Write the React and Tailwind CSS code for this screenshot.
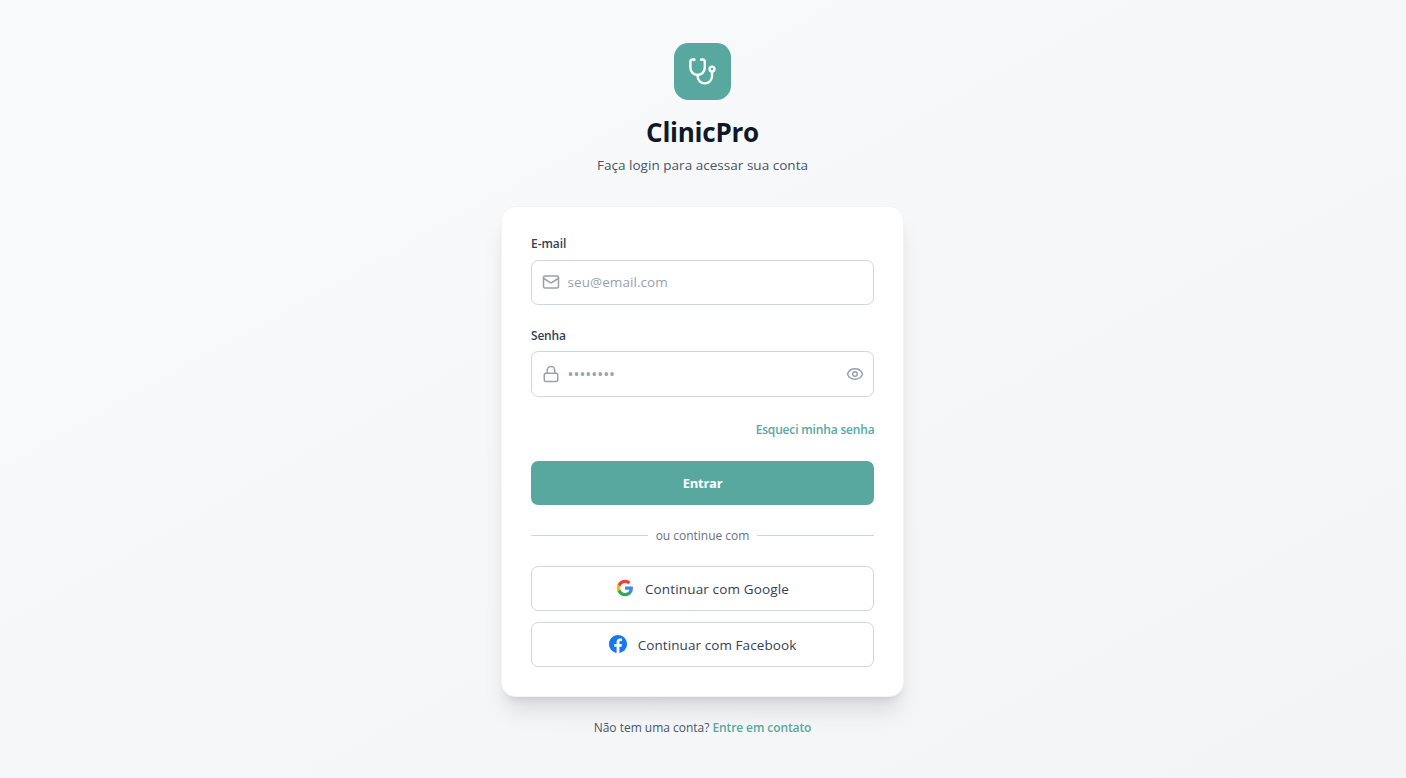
import { Lock, Eye } from "lucide-react";

function StethoscopeIcon() {
  return (
    <svg
      className="size-[28.8px] text-white"
      viewBox="0 0 24 24"
      fill="none"
      stroke="currentColor"
      strokeWidth="2"
      strokeLinecap="round"
      strokeLinejoin="round"
    >
      <path d="M4.8 2.3A.3.3 0 1 0 5 2H4a2 2 0 0 0-2 2v5a6 6 0 0 0 6 6 6 6 0 0 0 6-6V4a2 2 0 0 0-2-2h-1a.2.2 0 1 0 .3.3" />
      <path d="M8 15v1a6 6 0 0 0 6 6 6 6 0 0 0 6-6v-4" />
      <circle cx="20" cy="10" r="2" />
    </svg>
  );
}

function MailIcon() {
  return (
    <svg
      className="size-[18px] text-gray-400"
      viewBox="0 0 24 24"
      fill="none"
      stroke="currentColor"
      strokeWidth="2"
      strokeLinecap="round"
      strokeLinejoin="round"
    >
      <rect width="20" height="16" x="2" y="4" rx="2" />
      <path d="m22 7-8.97 5.7a1.94 1.94 0 0 1-2.06 0L2 7" />
    </svg>
  );
}

function GoogleIcon() {
  return (
    <svg className="mb-px size-[18px] shrink-0" viewBox="0 0 24 24">
      <path fill="#4285F4" d="M22.56 12.25c0-.78-.07-1.53-.2-2.25H12v4.26h5.92c-.26 1.37-1.04 2.53-2.21 3.31v2.77h3.57c2.08-1.92 3.28-4.74 3.28-8.09z" />
      <path fill="#34A853" d="M12 23c2.97 0 5.46-.98 7.28-2.66l-3.57-2.77c-.98.66-2.23 1.06-3.71 1.06-2.86 0-5.29-1.93-6.16-4.53H2.18v2.84C3.99 20.53 7.7 23 12 23z" />
      <path fill="#FBBC05" d="M5.84 14.09c-.22-.66-.35-1.36-.35-2.09s.13-1.43.35-2.09V7.07H2.18C1.43 8.55 1 10.22 1 12s.43 3.45 1.18 4.93l2.85-2.22.81-.62z" />
      <path fill="#EA4335" d="M12 5.38c1.62 0 3.06.56 4.21 1.64l3.15-3.15C17.45 2.09 14.97 1 12 1 7.7 1 3.99 3.47 2.18 7.07l3.66 2.84c.87-2.6 3.3-4.53 6.16-4.53z" />
    </svg>
  );
}

function FacebookIcon() {
  return (
    <svg className="mb-px size-[18px] shrink-0" viewBox="0 0 24 24">
      <path fill="#1877F2" d="M24 12.073c0-6.627-5.373-12-12-12s-12 5.373-12 12c0 5.99 4.388 10.954 10.125 11.854v-8.385H7.078v-3.47h3.047V9.43c0-3.007 1.792-4.669 4.533-4.669 1.312 0 2.686.235 2.686.235v2.953H15.83c-1.491 0-1.956.925-1.956 1.874v2.25h3.328l-.532 3.47h-2.796v8.385C19.612 23.027 24 18.062 24 12.073z" />
    </svg>
  );
}

export default function App() {
  return (
    <div className="flex h-[778px] justify-center bg-linear-to-br from-gray-50 to-gray-100 pr-px pt-[43px] font-['Open_Sans',sans-serif]">
      <div className="flex w-[403px] flex-col items-center">
        <div className="flex size-[57px] items-center justify-center rounded-[14.4px] bg-[#58a8a0]">
          <StethoscopeIcon />
        </div>
        <h1 className="mt-4 whitespace-nowrap text-[26px] leading-8 font-bold tracking-[-0.25px] text-gray-900">ClinicPro</h1>
        <p className="mt-[6px] whitespace-nowrap text-[13.5px] leading-[22px] tracking-[0.03px] text-gray-600">Faça login para acessar sua conta</p>

        <main className="mt-[29.5px] flex h-[491px] w-full flex-col rounded-[14.4px] border border-gray-100 bg-white px-[29px] pt-[28.5px] shadow-[0_18px_22.5px_-4.5px_rgba(0,0,0,0.1),0_7.2px_9px_-5.4px_rgba(0,0,0,0.1)]">
          <label className="text-[12px] leading-[18px] font-semibold tracking-[-0.05px] text-gray-700">E-mail</label>
          <div className="mt-[7px] flex h-[45px] items-center rounded-[7.2px] border border-gray-300 px-[10px] pb-px">
            <MailIcon />
            <span className="ml-[7.5px] text-[13.5px] leading-[22px] tracking-[0.07px] text-gray-400">seu@email.com</span>
          </div>
          <label className="mt-[22px] text-[12px] leading-[18px] font-semibold tracking-[-0.2px] text-gray-700">Senha</label>
          <div className="mt-[6px] flex h-[46px] items-center rounded-[7.2px] border border-gray-300 pr-[9px] pl-[10px]">
            <Lock className="size-[18px] text-gray-400" />
            <span className="ml-[7.5px] text-[15.8px] leading-[22px] text-gray-400">••••••••</span>
            <Eye className="ml-auto size-[18px] text-gray-400" />
          </div>
          <a className="mt-6 -mr-[0.5px] self-end whitespace-nowrap text-[12px] leading-[18px] font-semibold tracking-[-0.17px] text-[#58a8a0]">Esqueci minha senha</a>
          <button className="mt-[22px] h-[44px] rounded-[7.2px] bg-[#58a8a0] pt-[2px] text-[13px] font-bold tracking-[-0.25px] text-white">Entrar</button>
          <div className="mt-[22px] flex items-center">
            <div className="mb-px h-px flex-1 bg-gray-300" />
            <span className="px-2 text-[12px] leading-[18px] tracking-[-0.02px] text-gray-500">ou continue com</span>
            <div className="mb-px h-px flex-1 bg-gray-300" />
          </div>
          <button className="mt-[21px] flex h-[45px] items-center justify-center gap-[11px] rounded-[7.2px] border border-gray-300 text-[13.5px] tracking-[0.15px] text-gray-700">
            <GoogleIcon />
            <span className="pt-[2px]">Continuar com Google</span>
          </button>
          <button className="mt-[11px] flex h-[45px] items-center justify-center gap-[11px] rounded-[7.2px] border border-gray-300 text-[13.5px] tracking-[0.08px] text-gray-700">
            <FacebookIcon />
            <span className="pt-[2px]">Continuar com Facebook</span>
          </button>
        </main>

        <p className="mt-[22.5px] whitespace-nowrap text-[12px] leading-[18px] tracking-[-0.02px] text-gray-600">
          <span>Não tem uma conta? </span>
          <a className="font-semibold tracking-[-0.1px] text-[#58a8a0]">Entre em contato</a>
        </p>
      </div>
    </div>
  );
}
